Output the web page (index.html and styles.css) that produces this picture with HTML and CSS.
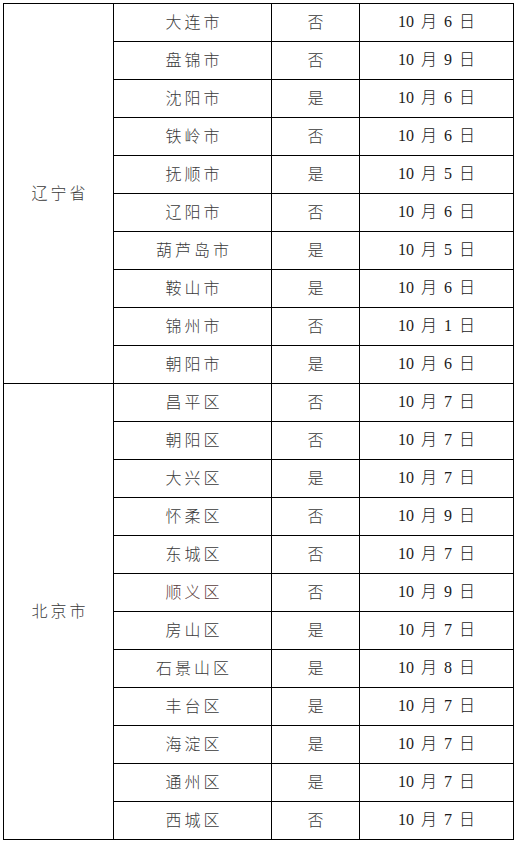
FILE: index.html
```html
<!DOCTYPE html>
<html>
<head>
<meta charset="utf-8">
<link rel="stylesheet" href="styles.css">
</head>
<body>
<table class="grid">
<colgroup><col class="c1"><col class="c2"><col class="c3"><col class="c4"></colgroup>
<tbody>
<tr><td class="prov" rowspan="10">辽宁省</td><td class="city">大连市</td><td class="yn">否</td><td class="date">10 月 6 日</td></tr>
<tr><td class="city">盘锦市</td><td class="yn">否</td><td class="date">10 月 9 日</td></tr>
<tr><td class="city">沈阳市</td><td class="yn">是</td><td class="date">10 月 6 日</td></tr>
<tr><td class="city">铁岭市</td><td class="yn">否</td><td class="date">10 月 6 日</td></tr>
<tr><td class="city">抚顺市</td><td class="yn">是</td><td class="date">10 月 5 日</td></tr>
<tr><td class="city">辽阳市</td><td class="yn">否</td><td class="date">10 月 6 日</td></tr>
<tr><td class="city">葫芦岛市</td><td class="yn">是</td><td class="date">10 月 5 日</td></tr>
<tr><td class="city">鞍山市</td><td class="yn">是</td><td class="date">10 月 6 日</td></tr>
<tr><td class="city">锦州市</td><td class="yn">否</td><td class="date">10 月 1 日</td></tr>
<tr><td class="city">朝阳市</td><td class="yn">是</td><td class="date">10 月 6 日</td></tr>
<tr><td class="prov" rowspan="12">北京市</td><td class="city">昌平区</td><td class="yn">否</td><td class="date">10 月 7 日</td></tr>
<tr><td class="city">朝阳区</td><td class="yn">否</td><td class="date">10 月 7 日</td></tr>
<tr><td class="city">大兴区</td><td class="yn">是</td><td class="date">10 月 7 日</td></tr>
<tr><td class="city">怀柔区</td><td class="yn">否</td><td class="date">10 月 9 日</td></tr>
<tr><td class="city">东城区</td><td class="yn">否</td><td class="date">10 月 7 日</td></tr>
<tr><td class="city warm">顺义区</td><td class="yn">否</td><td class="date">10 月 9 日</td></tr>
<tr><td class="city">房山区</td><td class="yn">是</td><td class="date">10 月 7 日</td></tr>
<tr><td class="city">石景山区</td><td class="yn">是</td><td class="date">10 月 8 日</td></tr>
<tr><td class="city">丰台区</td><td class="yn">是</td><td class="date">10 月 7 日</td></tr>
<tr><td class="city">海淀区</td><td class="yn">是</td><td class="date">10 月 7 日</td></tr>
<tr><td class="city">通州区</td><td class="yn">是</td><td class="date">10 月 7 日</td></tr>
<tr><td class="city">西城区</td><td class="yn">否</td><td class="date">10 月 7 日</td></tr>
</tbody>
</table>
</body>
</html>
```

FILE: styles.css
```css
html, body {
  margin: 0;
  padding: 0;
  background: #fff;
}
body {
  padding: 3px 0 0 3px;
  font-family: "Liberation Serif", "Noto Sans CJK SC", serif;
  color: #333;
}
.grid {
  border-collapse: collapse;
  table-layout: fixed;
  width: 510px;
}
.c1 { width: 110px; }
.c2 { width: 158px; }
.c3 { width: 88px; }
.c4 { width: 154px; }
.grid td {
  border: 1px solid #000;
  height: 37px;
  padding: 0;
  text-align: center;
  vertical-align: middle;
  font-size: 16px;
  line-height: 20px;
}
.prov, .city, .yn {
  font-family: "Noto Sans CJK SC", sans-serif;
  font-size: 15px;
  letter-spacing: 3px;
  text-indent: 3px;
  color: #3a3a3a;
  font-weight: 300;
  padding-bottom: 3px !important;
  height: 34px !important;
}
.yn {
  letter-spacing: 0;
  text-indent: 0;
}
.date {
  font-family: "Liberation Serif", "Noto Sans CJK SC", serif;
  font-size: 16px;
  font-weight: 300;
  color: #1a1a1a;
  word-spacing: 3px;
  padding-bottom: 1px !important;
  height: 36px !important;
}
.warm {
  color: #5a3c3c;
}
```
